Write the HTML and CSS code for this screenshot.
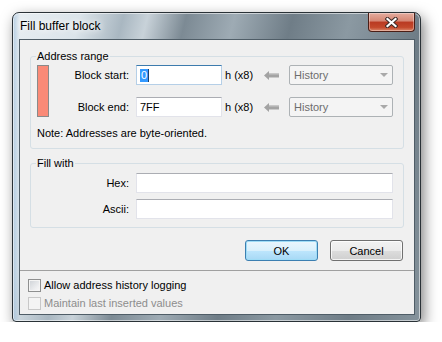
FILE: index.html
```html
<!DOCTYPE html>
<html lang="en">
<head>
    <meta charset="UTF-8">
    <meta name="viewport" content="width=device-width, initial-scale=1.0">
    <title>Fill buffer block</title>
    <link rel="stylesheet" href="styles.css">
</head>
<body>

<div class="window">
    <div class="titlebar">
        <span class="title">Fill buffer block</span>
        <button class="close" aria-label="Close">
            <svg width="13" height="11" viewBox="0 0 13 11">
                <path d="M2.5 2 L10.5 9 M10.5 2 L2.5 9" stroke="#3b2a26" stroke-width="4.2" stroke-linecap="square"/>
                <path d="M2.5 2 L10.5 9 M10.5 2 L2.5 9" stroke="#fff" stroke-width="2.2" stroke-linecap="square"/>
            </svg>
        </button>
    </div>

    <div class="client">
        <fieldset class="group">
            <legend>Address range</legend>
            <div class="range-grid">
                <div class="swatch"></div>
                <label class="lbl">Block start:</label>
                <div class="field focused"><span class="sel">0</span></div>
                <span class="unit">h (x8)</span>
                <svg class="arrow" width="15" height="9" viewBox="0 0 15 9">
                    <path d="M0 4.5 L5 0 L5 2.5 L15 2.5 L15 6.5 L5 6.5 L5 9 Z" fill="#a3a3a3"/>
                    <path d="M5 2.5 L15 2.5 L15 3.5 L5 3.5 Z" fill="#c4c4c4"/>
                </svg>
                <div class="combo">History<span class="caret"></span></div>

                <label class="lbl">Block end:</label>
                <div class="field">7FF</div>
                <span class="unit">h (x8)</span>
                <svg class="arrow" width="15" height="9" viewBox="0 0 15 9">
                    <path d="M0 4.5 L5 0 L5 2.5 L15 2.5 L15 6.5 L5 6.5 L5 9 Z" fill="#a3a3a3"/>
                    <path d="M5 2.5 L15 2.5 L15 3.5 L5 3.5 Z" fill="#c4c4c4"/>
                </svg>
                <div class="combo">History<span class="caret"></span></div>
            </div>
            <p class="note">Note: Addresses are byte-oriented.</p>
        </fieldset>

        <fieldset class="group fill">
            <legend>Fill with</legend>
            <div class="fill-grid">
                <label class="lbl">Hex:</label>
                <div class="field"></div>
                <label class="lbl">Ascii:</label>
                <div class="field"></div>
            </div>
        </fieldset>

        <div class="buttons">
            <button class="btn default">OK</button>
            <button class="btn">Cancel</button>
        </div>

        <div class="options">
            <label class="check"><span class="box"></span>Allow address history logging</label>
            <label class="check disabled"><span class="box"></span>Maintain last inserted values</label>
        </div>
    </div>
</div>

</body>
</html>
```

FILE: styles.css
```css
body {
    margin: 0;
    background-color: #fff;
    font-family: "Liberation Sans", Arial, sans-serif;
    font-size: 11px;
    color: #000;
}

.window {
    box-sizing: border-box;
    width: 409px;
    height: 310px;
    margin: 12px 0 0 12px;
    padding: 0 5px 6px 6px;
    display: flex;
    flex-direction: column;
    border: 1px solid #2a3237;
    border-radius: 7px 7px 4px 4px;
    background:
        linear-gradient(90deg, rgba(140, 180, 215, 0.55) 0, rgba(140, 180, 215, 0) 7px),
        linear-gradient(104deg, #e8eef2 0%, #dbe4ea 14%, #a9b7c1 23%, #c8d2d9 28%, #7c8a94 36%, #9eabb4 46%, #6f7d87 58%, #8b99a2 70%, #6e7c86 85%, #85939c 100%);
    box-shadow: 3px 5px 14px rgba(0, 0, 0, 0.5), inset 0 0 0 1px rgba(255, 255, 255, 0.55);
}

.titlebar {
    height: 26px;
    display: flex;
    justify-content: space-between;
    align-items: flex-start;
}

.title {
    align-self: center;
    margin-left: 1px;
    font-size: 12px;
    text-shadow: 0 0 6px #fff, 0 0 10px #fff;
}

.close {
    width: 47px;
    height: 19px;
    padding: 0;
    display: flex;
    justify-content: center;
    align-items: center;
    border: 1px solid #4a1e16;
    border-top: none;
    border-radius: 0 0 4px 4px;
    background: linear-gradient(#e4ac9e 0%, #d58673 45%, #b93a22 50%, #c3492c 80%, #db8a6d 100%);
    box-shadow: inset 0 0 0 1px rgba(255, 255, 255, 0.35);
}

.client {
    flex: 1;
    display: flex;
    flex-direction: column;
    background-color: #f0f0f0;
    border: 1px solid #4f5d67;
}

.group {
    margin: 9px 10px 0 10px;
    padding: 2px 10px 8px 6px;
    min-width: 0;
    border: 1px solid #d5dfe5;
    border-radius: 3px;
}

.group legend {
    padding: 0 1px;
    margin-left: -1px;
    line-height: 14px;
}

.group.fill {
    margin-top: 7px;
    padding-top: 3px;
}

.range-grid {
    display: grid;
    grid-template-columns: 12px 87px 86px 42px 25px 104px;
    grid-template-rows: 20px 20px;
    row-gap: 12px;
    align-items: center;
}

.fill-grid {
    display: grid;
    grid-template-columns: 99px 257px;
    grid-template-rows: 20px 20px;
    row-gap: 6px;
    align-items: center;
}

.swatch {
    grid-row: 1 / 3;
    align-self: stretch;
    background-color: #fa8a77;
    border: 1px solid #8a8a8a;
}

.lbl {
    text-align: right;
    padding-right: 7px;
}

.field {
    box-sizing: border-box;
    height: 20px;
    padding: 0 3px;
    display: flex;
    align-items: center;
    background-color: #fff;
    border: 1px solid #e2e3ea;
    border-top-color: #abadb3;
}

.field.focused {
    border-color: #b5cfe7;
    border-top-color: #3d7bad;
}

.sel {
    background-color: #3399ff;
    color: #fff;
    padding: 0 1px;
    border-right: 1px solid #1a3f6e;
    line-height: 13px;
}

.unit {
    padding-left: 3px;
}

.combo {
    box-sizing: border-box;
    height: 20px;
    padding: 0 4px;
    display: flex;
    align-items: center;
    justify-content: space-between;
    color: #6d6d6d;
    background-color: #f4f4f4;
    border: 1px solid #adb2b5;
    border-radius: 2px;
}

.caret {
    width: 0;
    height: 0;
    border-left: 4px solid transparent;
    border-right: 4px solid transparent;
    border-top: 4px solid #a9a9a9;
}

.note {
    margin: 10px 0 0;
    line-height: 13px;
}

.buttons {
    display: flex;
    justify-content: flex-end;
    gap: 12px;
    margin: 12px 11px 0 0;
}

.btn {
    width: 73px;
    height: 21px;
    padding: 0;
    font-family: inherit;
    font-size: 11px;
    color: #000;
    border: 1px solid #707070;
    border-radius: 3px;
    background: linear-gradient(#f2f2f2 0%, #ebebeb 50%, #dddddd 50%, #cfcfcf 100%);
    box-shadow: inset 0 0 0 1px rgba(255, 255, 255, 0.75);
}

.btn.default {
    border-color: #3c7fb1;
    background: linear-gradient(#eaf6fd 0%, #d9f0fc 50%, #bee6fd 50%, #a7d9f5 100%);
    box-shadow: inset 0 0 0 1px #9fdcf6;
}

.options {
    flex: 1;
    margin-top: 9px;
    padding: 5px 0 0 8px;
    border-top: 1px solid #a0a0a0;
}

.check {
    height: 18px;
    display: flex;
    align-items: center;
    gap: 3px;
}

.box {
    box-sizing: border-box;
    width: 13px;
    height: 13px;
    border: 1px solid #8e8f8f;
    background: linear-gradient(135deg, #cdd1d6 0%, #eeeff1 70%, #f8f8f8 100%);
    box-shadow: inset 0 0 0 1px #f4f4f4;
}

.check.disabled {
    color: #8d8d8d;
}

.check.disabled .box {
    border-color: #c8c8c8;
    background: #f4f4f4;
}
```
